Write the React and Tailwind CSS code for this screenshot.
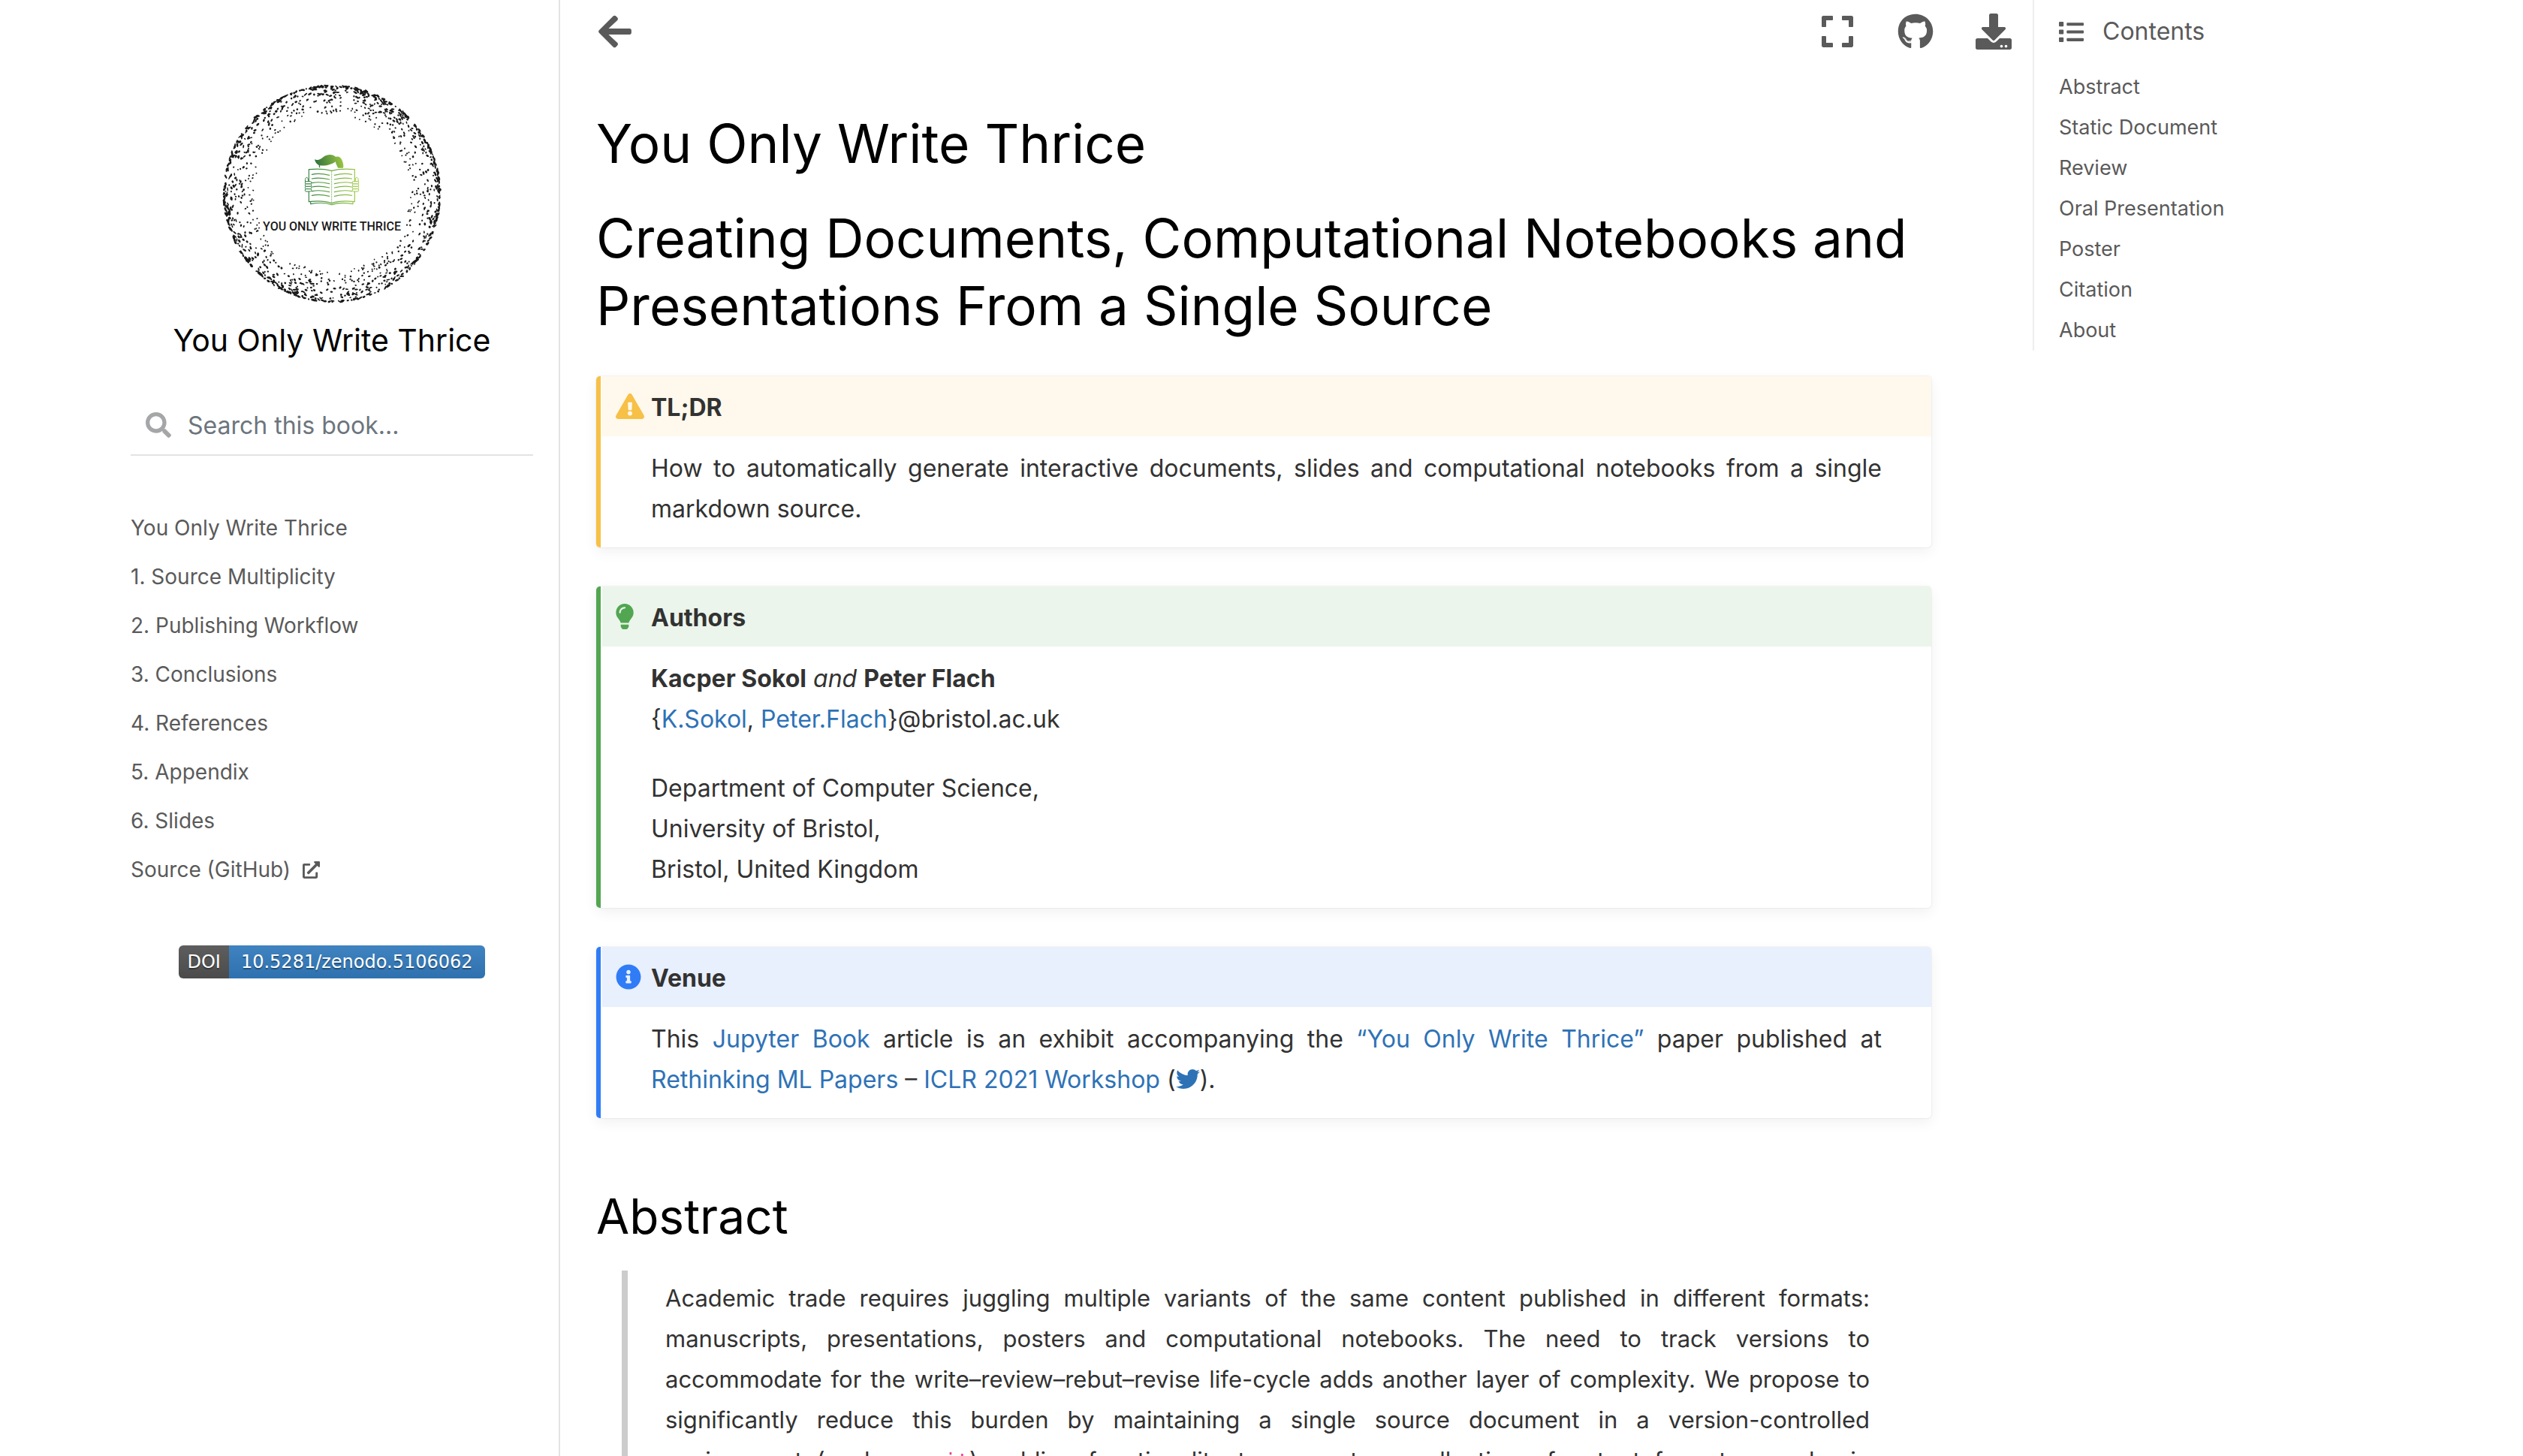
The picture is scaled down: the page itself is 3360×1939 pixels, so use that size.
import React from "react";
import {
  FaArrowLeft,
  FaDownload,
  FaExclamationTriangle,
  FaExpand,
  FaExternalLinkAlt,
  FaGithub,
  FaInfoCircle,
  FaLightbulb,
  FaList,
  FaSearch,
  FaTwitter,
} from "react-icons/fa";

const chapters = [
  "You Only Write Thrice",
  "1. Source Multiplicity",
  "2. Publishing Workflow",
  "3. Conclusions",
  "4. References",
  "5. Appendix",
  "6. Slides",
];

const sections = [
  "Abstract",
  "Static Document",
  "Review",
  "Oral Presentation",
  "Poster",
  "Citation",
  "About",
];

// Speckles that get denser and larger towards the rim of the logo.
function makeSpeckles(count) {
  let seed = 20210507;
  const random = () => {
    seed = (seed * 1664525 + 1013904223) % 4294967296;
    return seed / 4294967296;
  };
  return Array.from({ length: count }, () => {
    const angle = random() * 360;
    const depth = Math.pow(random(), 2.4);
    const radius = 144 - depth * 40;
    return {
      angle,
      radius,
      rx: 0.8 + random() * 0.6,
      ry: 0.9 + random() * (1 - depth) * 2.4,
      tilt: random() * 80 - 40,
    };
  });
}

const speckles = makeSpeckles(1300);

function Logo() {
  const rows = [127, 144, 161, 177, 194, 211];
  return (
    <svg viewBox="0 0 292 292" className="size-[292px]" role="img" aria-label="You Only Write Thrice logo">
      <defs>
        <linearGradient id="leaf" gradientUnits="userSpaceOnUse" x1="118" y1="90" x2="235" y2="60">
          <stop offset="0" stopColor="#2b6e3c" />
          <stop offset="1" stopColor="#a2cb43" />
        </linearGradient>
        <linearGradient id="book" gradientUnits="userSpaceOnUse" x1="78" y1="150" x2="295" y2="150">
          <stop offset="0" stopColor="#2b7a40" />
          <stop offset="0.5" stopColor="#6dab46" />
          <stop offset="1" stopColor="#a2cb43" />
        </linearGradient>
      </defs>
      <g fill="#1a1a1a">
        {speckles.map((s, i) => (
          <ellipse
            key={i}
            rx={s.rx}
            ry={s.ry}
            transform={`translate(146 146) rotate(${s.angle}) translate(${s.radius} 0) rotate(${s.tilt})`}
          />
        ))}
      </g>
      <g transform="translate(84 78) scale(0.3333)">
        <path
          fill="url(#leaf)"
          d="M117 67C132 72 142 65 153 56C168 46 189 44 202 57C212 53 222 59 227 71C232 82 233 93 231 101H211C205 92 202 82 200 76C186 88 160 94 138 91L139 100L135 99L134 90C124 86 119 76 117 67Z"
        />
        <g fill="none" stroke="url(#book)" strokeWidth="3.5" strokeLinejoin="round" strokeLinecap="round">
          <path d="M94 107C125 104 158 105 185 112C212 105 245 104 277 107V236C245 232 212 232 185 242C158 232 125 232 94 236Z" />
          <path d="M101 238V245C132 239 160 239 185 248C210 239 238 239 270 245V238" />
          <path d="M185 114V240" strokeWidth="2" strokeDasharray="6 4" />
          {rows.map((y) => (
            <path key={y} d={`M106 ${y}C125 ${y - 4} 152 ${y - 3} 176 ${y + 3}M196 ${y + 3}C220 ${y - 3} 246 ${y - 4} 266 ${y}`} />
          ))}
        </g>
        <g fill="#ffffff" stroke="url(#book)" strokeWidth="3">
          <path d="M80 157C78 146 81 138 87 139C92 141 90 150 93 157Z" />
          <path d="M291 157C293 146 290 138 284 139C279 141 281 150 278 157Z" />
          {[155, 165, 175, 185].map((y) => (
            <g key={y}>
              <rect x="79" y={y} width="25" height="10" rx="4" />
              <rect x="268" y={y} width="25" height="10" rx="4" />
            </g>
          ))}
        </g>
      </g>
      <text x="146" y="195" textAnchor="middle" className="fill-[#1a1a1a] font-['Roboto',sans-serif] text-[16px] font-medium">
        YOU ONLY WRITE THRICE
      </text>
    </svg>
  );
}

function Link({ children, label }) {
  return (
    <a href="#" aria-label={label} className="text-[#2e72b6]">
      {children}
    </a>
  );
}

function Admonition({ title, icon, edge, head, tint, children }) {
  return (
    <section
      className={`overflow-hidden rounded-[5px] border-l-[6px] pl-0.5 shadow-[0_6px_18px_rgba(0,0,0,0.06),0_0_2px_rgba(0,0,0,0.14)] ${edge}`}
    >
      <div className={`flex h-20 items-center pl-[18px] ${head}`}>
        <span className={`flex w-[47px] items-center ${tint}`}>{icon}</span>
        <p className="pt-1 font-bold">{title}</p>
      </div>
      <div className="pt-4 pr-[66px] pb-6 pl-[65px] text-justify">{children}</div>
    </section>
  );
}

function Sidebar() {
  return (
    <aside className="flex min-w-0 flex-col border-r-2 border-[#e3e3e3] pt-28 pr-[34px] pl-[174px]">
      <a href="#" className="flex flex-col items-center gap-6 text-black">
        <Logo />
        <span className="text-[41px] leading-[50px]">You Only Write Thrice</span>
      </a>
      <form className="mt-[49px] flex h-20 items-center gap-[22px] border-b-2 border-[#e3e3e3] pl-5">
        <label htmlFor="search" className="text-[#a4a6a7]">
          <FaSearch className="size-[34px]" aria-label="Search" />
        </label>
        <input
          id="search"
          type="search"
          placeholder="Search this book..."
          className="w-0 flex-1 pt-0.5 text-[#323232] outline-none placeholder:text-[#6c757d]"
        />
      </form>
      <nav className="mt-16 text-[28px] leading-[65px] text-[#5a5a5a]">
        <ul>
          {chapters.map((chapter) => (
            <li key={chapter}>
              <a href="#">{chapter}</a>
            </li>
          ))}
          <li>
            <a href="#" className="flex items-center gap-4">
              Source (GitHub)
              <FaExternalLinkAlt className="size-[23px]" />
            </a>
          </li>
        </ul>
      </nav>
      <a
        href="#"
        className="mt-[68px] flex h-11 self-center overflow-hidden rounded-md font-['DejaVu_Sans',sans-serif] text-[24px] leading-[44px] text-white text-shadow-[0_2px_1px_rgba(0,0,0,0.35)]"
      >
        <span className="bg-linear-to-b from-[#5e5e5e] to-[#4b4b4b] px-[11px]">DOI</span>
        <span className="bg-linear-to-b from-[#4083c1] to-[#2e71ae] px-4">10.5281/zenodo.5106062</span>
      </a>
    </aside>
  );
}

function Toolbar() {
  return (
    <header className="flex h-[84px] items-center pr-7 pl-12 text-[#5a5a5a]">
      <button type="button" aria-label="Toggle navigation">
        <FaArrowLeft className="size-[50px]" />
      </button>
      <div className="ml-auto flex gap-14">
        <button type="button" aria-label="Fullscreen mode">
          <FaExpand className="size-12" />
        </button>
        <a href="#" aria-label="Source repository">
          <FaGithub className="size-12" />
        </a>
        <button type="button" aria-label="Download this page">
          <FaDownload className="size-12" />
        </button>
      </div>
    </header>
  );
}

function Article() {
  return (
    <article className="pt-[62px] pr-[135px] pl-12">
      <div className="flex flex-col gap-9 text-[71px] leading-[90px] text-black">
        <h1>You Only Write Thrice</h1>
        <h1>Creating Documents, Computational Notebooks and Presentations From a Single Source</h1>
      </div>

      <div className="mt-[49px] flex flex-col gap-[52px]">
        <Admonition
          title="TL;DR"
          icon={<FaExclamationTriangle className="size-[38px]" />}
          edge="border-[#f7c046]"
          head="bg-[#fff8ec]"
          tint="text-[#f7c046]"
        >
          <p>
            How to automatically generate interactive documents, slides and computational notebooks from a single
            markdown source.
          </p>
        </Admonition>

        <Admonition
          title="Authors"
          icon={<FaLightbulb className="h-[34px] w-6" />}
          edge="border-[#52a651]"
          head="bg-[#ebf5eb]"
          tint="text-[#52a651]"
        >
          <p>
            <strong>Kacper Sokol</strong> <em>and</em> <strong>Peter Flach</strong>
            <br />
            {"{"}
            <Link>K.Sokol</Link>, <Link>Peter.Flach</Link>
            {"}"}@bristol.ac.uk
          </p>
          <p className="mt-[38px]">
            Department of Computer Science,
            <br />
            University of Bristol,
            <br />
            Bristol, United Kingdom
          </p>
        </Admonition>

        <Admonition
          title="Venue"
          icon={<FaInfoCircle className="size-[34px]" />}
          edge="border-[#2f7cf6]"
          head="bg-[#e8effd]"
          tint="text-[#2f7cf6]"
        >
          <p>
            This <Link>Jupyter Book</Link> article is an exhibit accompanying the{" "}
            <Link>“You Only Write Thrice”</Link> paper published at <Link>Rethinking ML Papers</Link> –{" "}
            <Link>ICLR 2021 Workshop</Link> (
            <Link label="Twitter">
              <FaTwitter className="inline size-8 align-[-4px]" />
            </Link>
            ).
          </p>
        </Admonition>
      </div>

      <h2 className="mt-[95px] text-[64px] leading-[72px] text-black">Abstract</h2>
      <blockquote className="mt-9 mr-[82px] ml-[34px] border-l-8 border-[#cccccc] pt-2.5 pl-[50px] text-justify text-[31px]">
        <p>
          Academic trade requires juggling multiple variants of the same content published in different formats:
          manuscripts, presentations, posters and computational notebooks. The need to track versions to accommodate
          for the write–review–rebut–revise life-cycle adds another layer of complexity. We propose to significantly
          reduce this burden by maintaining a single source document in a version-controlled environment&nbsp;(such as{" "}
          <code className="font-['DejaVu_Sans_Mono',monospace] text-[28px] text-[#e83e8c]">git</code>), adding
          functionality to generate a collection of output formats popular in academia.
        </p>
      </blockquote>
    </article>
  );
}

function Contents() {
  return (
    <nav className="self-start border-l-2 border-[#eeeeee] pt-[15px] pl-[33px] text-[#5a5a5a]">
      <p className="flex items-center gap-[25px]">
        <FaList className="size-[33px]" />
        Contents
      </p>
      <ul className="mt-5 text-[27px]">
        {sections.map((section) => (
          <li key={section}>
            <a href="#">{section}</a>
          </li>
        ))}
      </ul>
    </nav>
  );
}

export default function App() {
  return (
    <div className="grid h-screen grid-cols-[746fr_1961fr_653fr] overflow-hidden bg-white font-['Inter',sans-serif] text-[32px] leading-[54px] text-[#323232]">
      <Sidebar />
      <main className="min-w-0">
        <Toolbar />
        <Article />
      </main>
      <Contents />
    </div>
  );
}
